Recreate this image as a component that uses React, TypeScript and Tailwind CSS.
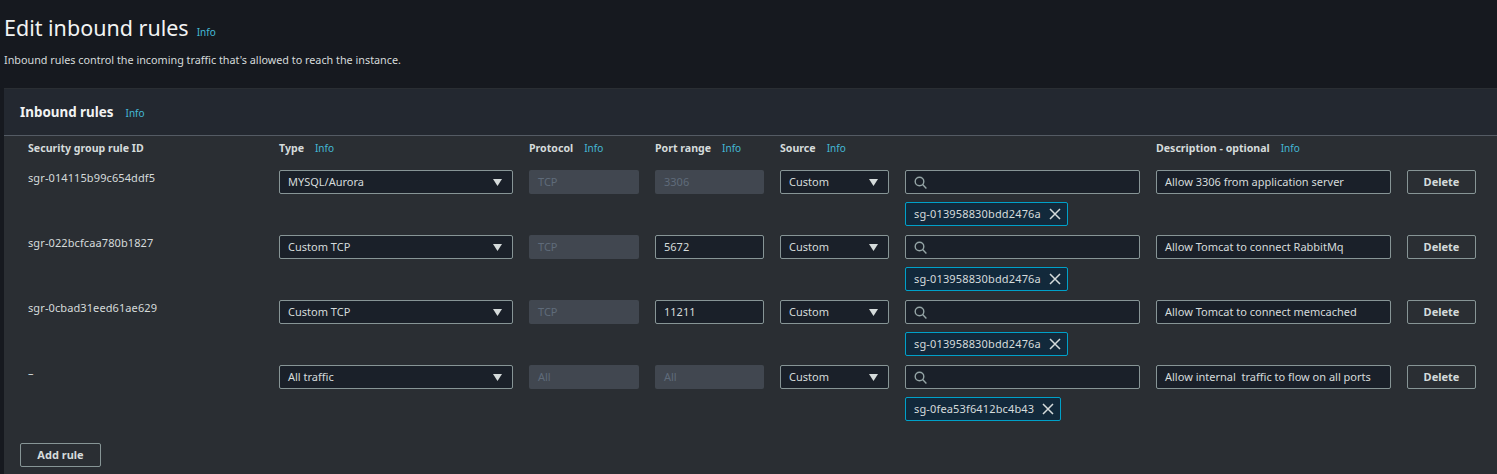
const rules = [
  { id: "sgr-014115b99c654ddf5", type: "MYSQL/Aurora", protocol: "TCP", port: "3306", portDisabled: true, chip: "sg-013958830bdd2476a", description: "Allow 3306 from application server" },
  { id: "sgr-022bcfcaa780b1827", type: "Custom TCP", protocol: "TCP", port: "5672", portDisabled: false, chip: "sg-013958830bdd2476a", description: "Allow Tomcat to connect RabbitMq" },
  { id: "sgr-0cbad31eed61ae629", type: "Custom TCP", protocol: "TCP", port: "11211", portDisabled: false, chip: "sg-013958830bdd2476a", description: "Allow Tomcat to connect memcached" },
  { id: "–", type: "All traffic", protocol: "All", port: "All", portDisabled: true, chip: "sg-0fea53f6412bc4b43", description: "Allow internal  traffic to flow on all ports" },
];

const columns = "grid grid-cols-[235px_234px_110px_109px_109px_235px_235px_69px] gap-x-4";

function Info({ className = "" }: { className?: string }) {
  return <span className={`text-[10px] font-normal text-[#44b9d6] ${className}`}>Info</span>;
}

function Select({ value }: { value: string }) {
  return (
    <div className="flex h-6 items-center justify-between rounded-[2px] border border-[#879596] bg-[#1a2029] pl-2 pr-[10px] text-[#d5dbdb]">
      <span>{value}</span>
      <svg width="9" height="7" viewBox="0 0 9 7">
        <path d="M0 0h9L4.5 7z" fill="#d5dbdb" />
      </svg>
    </div>
  );
}

function Field({ value, disabled }: { value: string; disabled?: boolean }) {
  if (disabled) {
    return (
      <div className="flex h-6 items-center rounded-[2px] bg-[#414750] pl-[9px] text-[#5f6b7a]">{value}</div>
    );
  }
  return (
    <div className="flex h-6 items-center rounded-[2px] border border-[#879596] bg-[#1a2029] pl-2 text-[#d5dbdb] whitespace-pre">
      {value}
    </div>
  );
}

function SourceSearch({ chip }: { chip: string }) {
  return (
    <div className="flex flex-col items-start gap-2">
      <div className="flex h-6 w-full items-center rounded-[2px] border border-[#879596] bg-[#1a2029] pl-2">
        <svg width="13" height="13" viewBox="0 0 13 13" fill="none" stroke="#95a5a6" strokeWidth="1.4">
          <circle cx="5.5" cy="5.5" r="4.3" />
          <path d="M8.6 8.6L12.4 12.4" />
        </svg>
      </div>
      <div className="flex h-6 items-center gap-2 rounded-[2px] border border-[#00a1c9] bg-[#12293b] pl-2 pr-[6px] text-[#d5dbdb]">
        <span className="tracking-[0.15px]">{chip}</span>
        <svg width="12" height="12" viewBox="0 0 12 12" stroke="#d5dbdb" strokeWidth="1.5">
          <path d="M1 1l10 10M11 1L1 11" />
        </svg>
      </div>
    </div>
  );
}

export default function App() {
  return (
    <div className="h-[474px] w-[1497px] overflow-hidden bg-[#16191f] pl-1 font-['Noto_Sans','Open_Sans',sans-serif] text-[11px] text-[#d5dbdb]">
      <div className="pt-[12px]">
        <div className="flex items-baseline gap-2">
          <h1 className="text-[21.5px] leading-[32px] font-normal text-[#f2f3f3]">Edit inbound rules</h1>
          <Info />
        </div>
        <p className="mt-[8px] text-[10.8px] leading-4 text-[#d5dbdb]">
          Inbound rules control the incoming traffic that's allowed to reach the instance.
        </p>
      </div>

      <section className="mt-[20px] h-[400px] border-t border-[#2a2e33] bg-[#2a2e33]">
        <div className="flex h-[47px] items-center gap-3 border-b border-[#545b64] bg-[#232830] pl-4">
          <h2 className="text-[13.4px] font-bold text-[#f2f3f3]">Inbound rules</h2>
          <Info className="mt-[2px]" />
        </div>

        <div className="pl-6 pt-[3px]">
          <div className={`${columns} h-[20px] items-center font-bold text-[#d5dbdb] text-[10.6px]`}>
            <div>Security group rule ID</div>
            <div className="flex items-center gap-[11px]">Type <Info /></div>
            <div className="flex items-center gap-[11px]">Protocol <Info /></div>
            <div className="flex items-center gap-[11px]">Port range <Info /></div>
            <div className="flex items-center gap-[11px]">Source <Info /></div>
            <div />
            <div className="flex items-center gap-[11px]">Description - optional <Info /></div>
            <div />
          </div>

          <div className="mt-[11px] flex flex-col gap-[9px]">
            {rules.map((rule) => (
              <div key={rule.id} className={columns}>
                <div className="leading-4 tracking-[0.1px] text-[#d5dbdb]">{rule.id}</div>
                <Select value={rule.type} />
                <Field value={rule.protocol} disabled />
                <Field value={rule.port} disabled={rule.portDisabled} />
                <Select value="Custom" />
                <SourceSearch chip={rule.chip} />
                <Field value={rule.description} />
                <div className="flex h-6 items-center justify-center rounded-[2px] border border-[#879596] font-bold text-[#d5dbdb]">
                  Delete
                </div>
              </div>
            ))}
          </div>
        </div>

        <div className="ml-4 mt-[22px] flex h-6 w-[81px] items-center justify-center rounded-[2px] border border-[#879596] font-bold text-[#d5dbdb]">
          Add rule
        </div>
      </section>
    </div>
  );
}
